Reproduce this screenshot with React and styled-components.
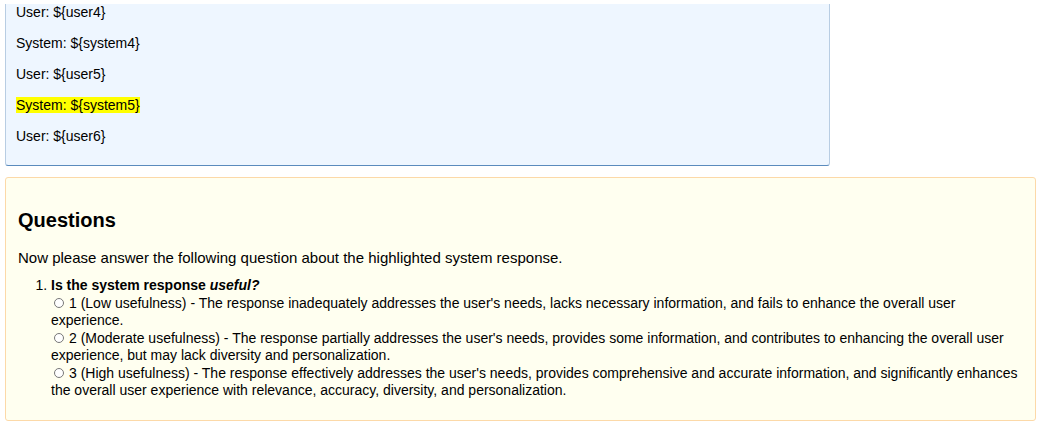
import React from "react";
import styled, { createGlobalStyle } from "styled-components";

const Global = createGlobalStyle`
  body { margin: 0; background: #fff; font-family: "Liberation Sans", Arial, sans-serif; color: #000; overflow: hidden; }
`;

const Page = styled.div`
  padding: 0 9px 0 5px;
`;

const Dialogue = styled.div`
  width: 825px;
  margin-top: 4px;
  padding: 0 10px 6px;
  box-sizing: border-box;
  background: #eef6ff;
  border: 1px solid #b8cde3;
  border-top: none;
  border-bottom-color: #5a8bbd;
  border-radius: 0 0 3px 3px;
  overflow: hidden;
  & > p:first-child { margin-top: 0; }
`;

const Turn = styled.p`
  margin: 14px 0;
  font-size: 14px;
  line-height: 17px;
  span { background: ${(p) => (p.$hl ? "#ffff00" : "transparent")}; }
`;

const Panel = styled.div`
  margin-top: 11px;
  padding: 0 12px 20px;
  background: #fffff0;
  border: 1px solid #fcd9a8;
  border-radius: 3px;
`;

const Title = styled.h2`
  margin: 31px 0 17px;
  font-size: 20px;
  line-height: 23px;
`;

const Intro = styled.p`
  margin: 0 0 10px;
  font-size: 15px;
  line-height: 18px;
`;

const List = styled.ol`
  margin: 0;
  padding-left: 33px;
  font-size: 14px;
  line-height: 17.5px;
`;

const Radio = styled.span`
  display: inline-block;
  width: 8px;
  height: 8px;
  margin: 0 5px 0 3px;
  border: 1px solid #777;
  border-radius: 50%;
  background: #fff;
  vertical-align: 0;
`;

const turns = [
  ["User: ${user4}"],
  ["System: ${system4}"],
  ["User: ${user5}"],
  ["System: ${system5}", true],
  ["User: ${user6}"],
];

const options = [
  "1 (Low usefulness) - The response inadequately addresses the user's needs, lacks necessary information, and fails to enhance the overall user experience.",
  "2 (Moderate usefulness) - The response partially addresses the user's needs, provides some information, and contributes to enhancing the overall user experience, but may lack diversity and personalization.",
  "3 (High usefulness) - The response effectively addresses the user's needs, provides comprehensive and accurate information, and significantly enhances the overall user experience with relevance, accuracy, diversity, and personalization.",
];

export default function App() {
  return (
    <Page>
      <Global />
      <Dialogue>
        {turns.map(([t, hl], i) => (
          <Turn key={i} $hl={hl}>
            <span>{t}</span>
          </Turn>
        ))}
      </Dialogue>
      <Panel>
        <Title>Questions</Title>
        <Intro>Now please answer the following question about the highlighted system response.</Intro>
        <List>
          <li>
            <b>
              Is the system response <i>useful?</i>
            </b>
            {options.map((o, i) => (
              <div key={i}>
                <Radio />
                {o}
              </div>
            ))}
          </li>
        </List>
      </Panel>
    </Page>
  );
}
